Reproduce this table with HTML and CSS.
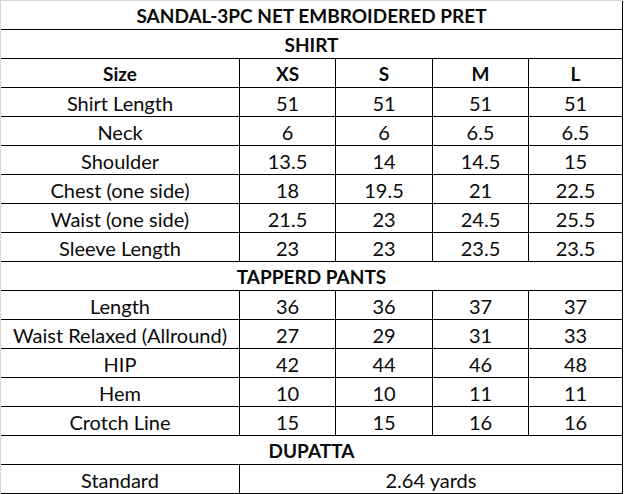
FILE: index.html
```html
<!DOCTYPE html>
<html>
<head>
<meta charset="utf-8">
<link rel="stylesheet" href="styles.css">
</head>
<body>
<div class="sheet">
  <div class="c full b">SANDAL-3PC NET EMBROIDERED PRET</div>
  <div class="c full b">SHIRT</div>
  <div class="c b">Size</div><div class="c b">XS</div><div class="c b">S</div><div class="c b">M</div><div class="c b">L</div>
  <div class="c">Shirt Length</div><div class="c">51</div><div class="c">51</div><div class="c">51</div><div class="c">51</div>
  <div class="c">Neck</div><div class="c">6</div><div class="c">6</div><div class="c">6.5</div><div class="c">6.5</div>
  <div class="c">Shoulder</div><div class="c">13.5</div><div class="c">14</div><div class="c">14.5</div><div class="c">15</div>
  <div class="c">Chest (one side)</div><div class="c">18</div><div class="c">19.5</div><div class="c">21</div><div class="c">22.5</div>
  <div class="c">Waist (one side)</div><div class="c">21.5</div><div class="c">23</div><div class="c">24.5</div><div class="c">25.5</div>
  <div class="c">Sleeve Length</div><div class="c">23</div><div class="c">23</div><div class="c">23.5</div><div class="c">23.5</div>
  <div class="c full b">TAPPERD PANTS</div>
  <div class="c">Length</div><div class="c">36</div><div class="c">36</div><div class="c">37</div><div class="c">37</div>
  <div class="c">Waist Relaxed (Allround)</div><div class="c">27</div><div class="c">29</div><div class="c">31</div><div class="c">33</div>
  <div class="c">HIP</div><div class="c">42</div><div class="c">44</div><div class="c">46</div><div class="c">48</div>
  <div class="c">Hem</div><div class="c">10</div><div class="c">10</div><div class="c">11</div><div class="c">11</div>
  <div class="c">Crotch Line</div><div class="c">15</div><div class="c">15</div><div class="c">16</div><div class="c">16</div>
  <div class="c full b">DUPATTA</div>
  <div class="c">Standard</div><div class="c span4">2.64 yards</div>
</div>
</body>
</html>
```
FILE: styles.css
```css
html, body {
  margin: 0;
  padding: 0;
  background: #fff;
}
.sheet {
  display: grid;
  grid-template-columns: 238px 95px 96px 95px 93px;
  grid-auto-rows: 28px;
  gap: 1px;
  width: max-content;
  background: #000;
  border-top: 1px solid #d4d4d4;
  border-left: 1px solid #d4d4d4;
  padding: 0 1px 1px 0;
  font-family: Lato, "Liberation Sans", sans-serif;
  font-size: 20px;
  color: #0a0a0a;
}
.c {
  background: #fff;
  text-align: center;
  white-space: nowrap;
  line-height: 26px;
  padding-top: 2px;
  box-sizing: border-box;
}
.b {
  font-weight: bold;
  font-size: 19px;
}
.full {
  grid-column: 1 / -1;
}
.span4 {
  grid-column: 2 / -1;
}
```
